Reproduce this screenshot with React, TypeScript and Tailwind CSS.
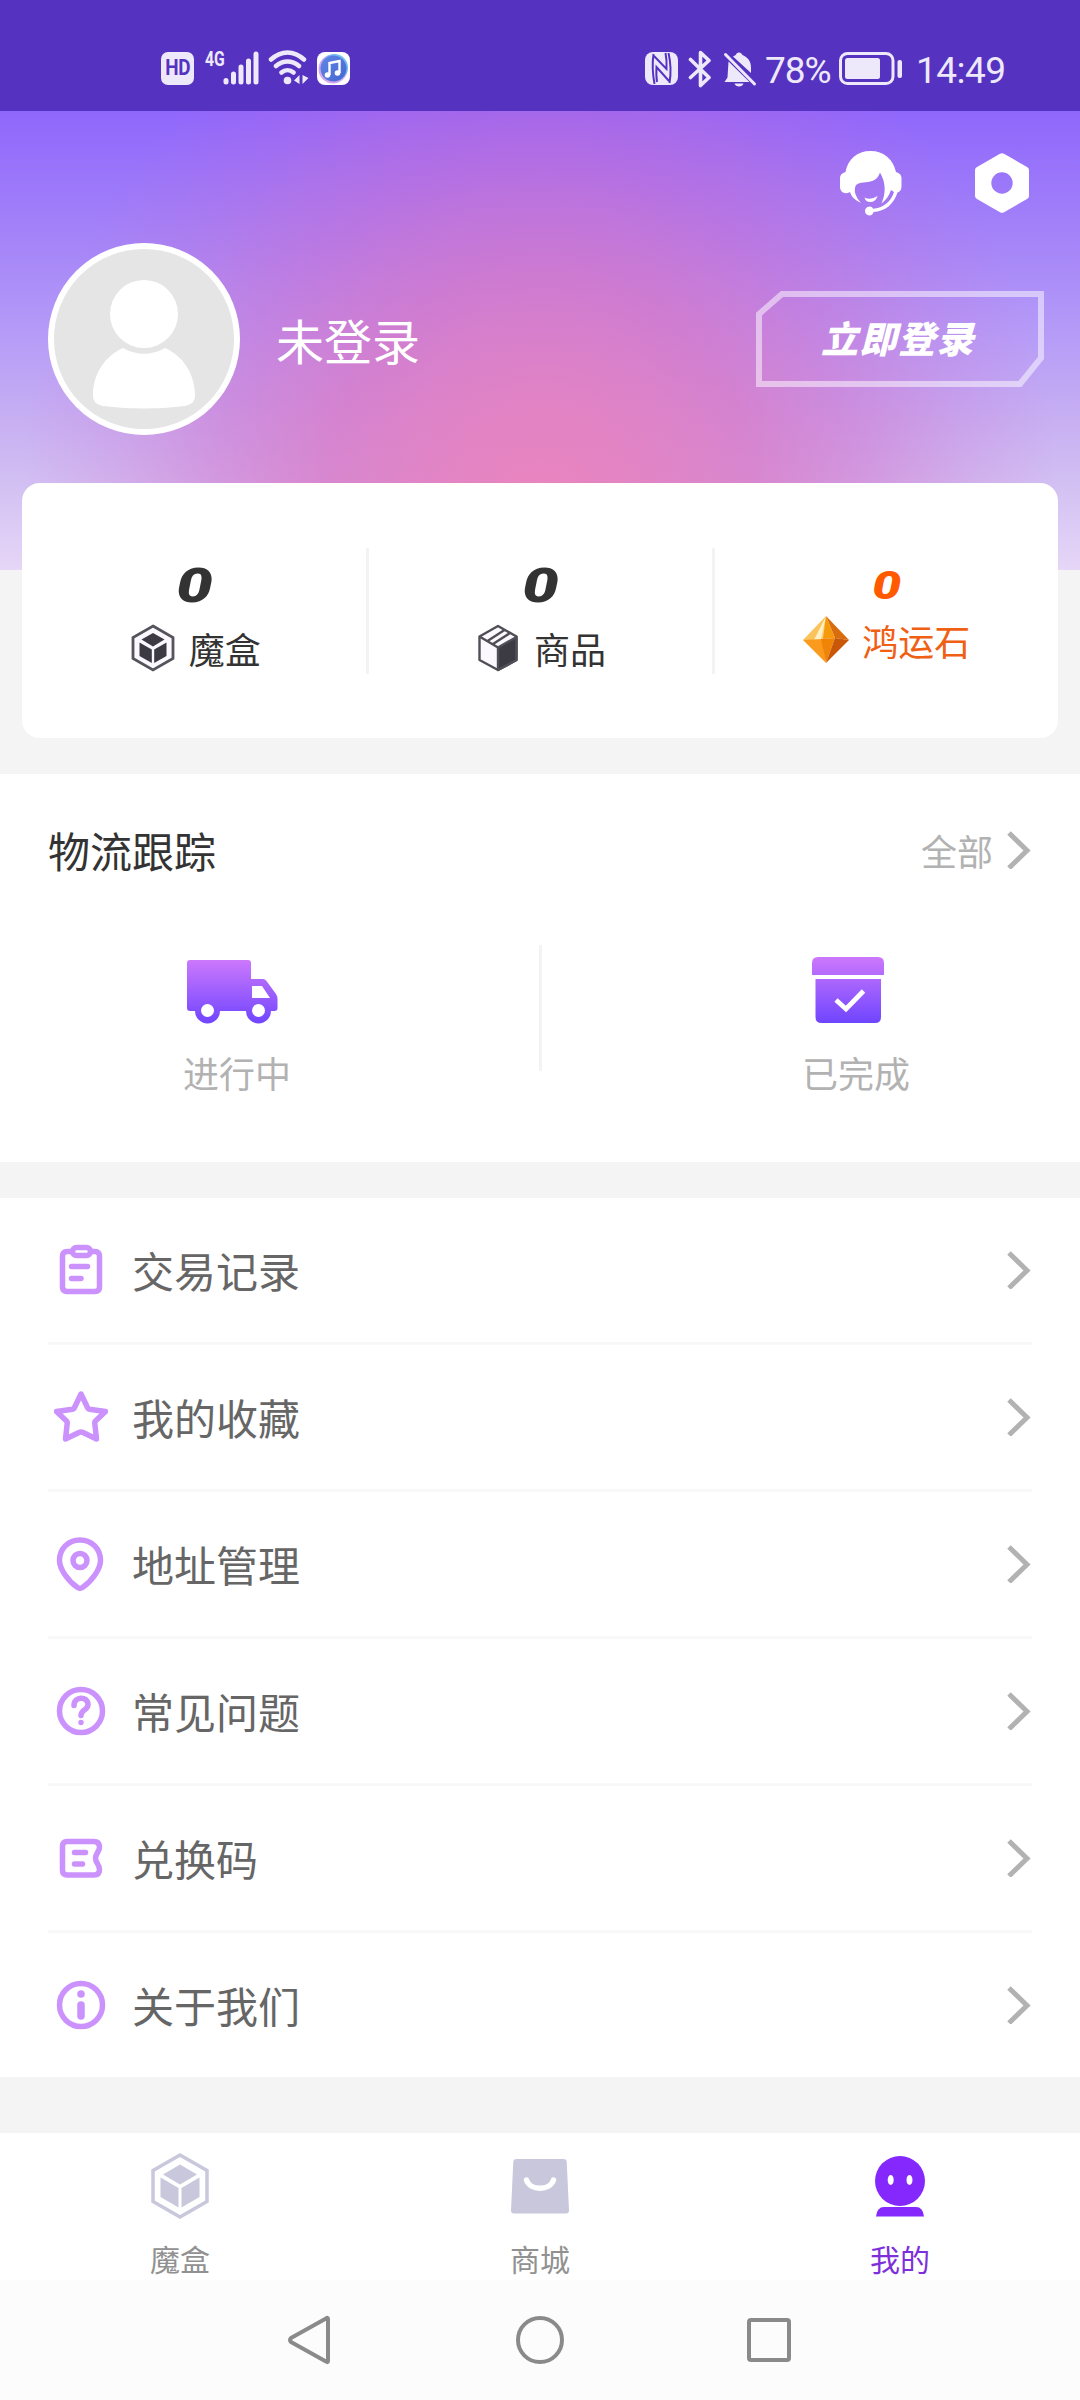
import React from 'react'

interface IconProps {
  className?: string
}

const HdIcon = () => (
  <span className="flex h-[33px] w-[33px] items-center justify-center rounded-[7px] bg-[#eee8fb]">
    <span className="scale-x-[0.9] scale-y-[1.05] font-['Roboto','Noto_Sans_CJK_SC',sans-serif] text-[21px] leading-none font-bold tracking-[-0.5px] text-[#5533c0]">HD</span>
  </span>
)

const SignalIcon = () => (
  <span className="relative block h-[36px] w-[55px] text-[#eee8fb]">
    <span className="absolute top-[-1px] left-0 origin-left scale-x-[0.75] font-['Roboto',sans-serif] text-[21px] leading-[20px] font-bold">4G</span>
    <svg className="absolute top-0 left-[18px]" width="36" height="36" viewBox="0 0 36 36" stroke="currentColor" strokeWidth="5" strokeLinecap="round">
      <path d="M3 30.5V32M10.500 24V32M18 17V32M25.500 11V32M33 4V32" />
    </svg>
  </span>
)

const WifiIcon = () => (
  <svg width="42" height="36" viewBox="0 0 42 36" fill="none" stroke="#eee8fb" strokeWidth="4.500" strokeLinecap="round">
    <path d="M3 9.500C13 0 26 0 36 9.500M8 16C15 10 24 10 31 16M13.500 22.500C17 19.500 22 19.500 25.500 22.500" />
    <circle cx="19.500" cy="30.500" r="3.800" fill="#eee8fb" stroke="none" />
    <path d="M31.500 25v9l-5.500-3.500zM34.500 25v9l6-6z" fill="#eee8fb" stroke="none" />
  </svg>
)

const MusicIcon = () => (
  <svg width="33" height="33" viewBox="0 0 33 33">
    <defs>
      <linearGradient id="music" x1="0" y1="0" x2="1" y2="1">
        <stop offset="0" stopColor="#5f86e6" />
        <stop offset="1" stopColor="#4468d2" />
      </linearGradient>
    </defs>
    <rect width="33" height="33" rx="8" fill="#fff" />
    <circle cx="16" cy="17" r="14.500" fill="#d6a5ee" />
    <circle cx="17.500" cy="15.500" r="13.500" fill="#74bdf2" />
    <circle cx="16.500" cy="16.500" r="13" fill="url(#music)" />
    <path d="M12.500 23V11l10-2v12" fill="none" stroke="#fff" strokeWidth="2.400" />
    <circle cx="10.500" cy="23" r="2.800" fill="#fff" />
    <circle cx="20.500" cy="21" r="2.800" fill="#fff" />
  </svg>
)

const NfcIcon = () => (
  <svg width="33" height="33" viewBox="0 0 33 33">
    <rect width="33" height="33" rx="8" fill="#eee8fb" />
    <path d="M8.500 2Q6.500 16 9.500 32M9 4L21.500 17Q22 8 20.500 1M24.500 31Q27 16 23.500 1M24 29L11.500 15Q11 24 12 30" fill="none" stroke="#5533c0" strokeWidth="2" />
  </svg>
)

const BluetoothIcon = () => (
  <svg width="24" height="38" viewBox="0 0 24 38" fill="none" stroke="#eee8fb" strokeWidth="3.600" strokeLinecap="round" strokeLinejoin="round">
    <path d="M2.500 9.500L21 27.500l-8.500 8V2.500L21 10.500 2.500 27.500" />
  </svg>
)

const BellOffIcon = () => (
  <svg width="34" height="35" viewBox="0 0 34 35" fill="#eee8fb">
    <path d="M10 4.500c2-1 3-1.500 4-3.500q2-1 4 0c1 2 2 2 3.500 3 5 3 6.500 7 6.500 11.500V21z" />
    <path d="M5.500 9.500l21 20.500H1.500l3-4.500zM11.500 31.500h9c-1 4-8 4-9 0z" />
    <path d="M2.500 2.500l29 29.500" stroke="#eee8fb" strokeWidth="3" strokeLinecap="round" />
  </svg>
)

const BatteryIcon = () => (
  <svg width="64" height="34" viewBox="0 0 64 34" fill="none">
    <rect x="1.500" y="1.500" width="52.500" height="30" rx="7" stroke="#eee8fb" strokeWidth="3" />
    <rect x="6" y="6" width="35" height="21" rx="2.500" fill="#eee8fb" />
    <rect x="58.500" y="8" width="4.500" height="18" rx="2" fill="#eee8fb" />
  </svg>
)

const StatusBar = () => (
  <div className="flex h-[111px] items-start justify-between bg-[#5533c0] pt-[50px] pr-[75px] pl-[161px]">
    <div className="flex items-start">
      <div className="mt-[2px] mr-[11px]"><HdIcon /></div>
      <SignalIcon />
      <div className="ml-[8px]"><WifiIcon /></div>
      <div className="mt-[2px] ml-[7px]"><MusicIcon /></div>
    </div>
    <div className="flex items-start font-['Roboto','Noto_Sans_CJK_SC',sans-serif] text-[37px] leading-[42px] text-[#eee8fb]">
      <div className="mt-[2px]"><NfcIcon /></div>
      <div className="ml-[10px]"><BluetoothIcon /></div>
      <div className="mt-[2px] ml-[11px]"><BellOffIcon /></div>
      <span className="ml-[8px] w-[74px] tracking-[-1px]">78%</span>
      <div className="mt-[2px]"><BatteryIcon /></div>
      <span className="ml-[13px] w-[89px] tracking-[-0.5px]">14:49</span>
    </div>
  </div>
)

const ServiceIcon = () => (
  <svg width="62" height="66" viewBox="0 0 62 66">
    <path
      fill="#fff"
      fillRule="evenodd"
      d="M5.500 21C8 8 17 0 30.500 0S53 8 56 21c3.500 1 5.500 3 5.500 6v8c0 4-1.500 6-4 6.500C54 53 45 60.500 33.500 61 33 63 31.500 64.500 29.500 64.500c-6 0-6-9 0-9 1.500 0 3 .8 3.500 2.200C43 57 51 51 54 41l-3-2c-2 6-5 10-9.500 13.500C46 42 46 32 40 21.500c-2 6-6 8.500-12 9.500-7 1-10 .5-12.500 4-2 6 .5 11 5.500 17C15 49 11.500 46 10 41c-5 3-10 0-10-5v-9c0-3 2-5 5.500-6z"
    />
    <path d="M24.500 46.500q6.500 3 13-1.500-2 6-7 6t-6-4.500z" fill="#fff" />
  </svg>
)

const SettingIcon = () => (
  <svg width="54" height="60" viewBox="0 0 54 60">
    <path
      fill="#fff"
      fillRule="evenodd"
      d="M25 .8q2-1.200 4 0L52 14q2 1.200 2 3v26q0 1.800-2 3L29 59.200q-2 1.200-4 0L2 46q-2-1.200-2-3v-26q0-1.800 2-3zM27 19.300a10.700 10.700 0 1 0 0 21.400 10.700 10.700 0 0 0 0-21.400z"
    />
  </svg>
)

const Avatar = () => (
  <div className="h-[192px] w-[192px] overflow-hidden rounded-full border-[6px] border-white bg-[#e5e5e5]">
    <svg width="180" height="180" viewBox="0 0 180 180" fill="#fff">
      <circle cx="90" cy="65" r="34" />
      <path d="M69 99q21 11.500 42 0c18 8 30 26 30 47 0 7-3 9-10 11q-41 5-82 0c-7-2-10-4-10-11 0-21 12-39 30-47z" />
    </svg>
  </div>
)

const LoginButton = () => (
  <button className="relative h-24 w-[288px]">
    <svg className="absolute inset-0" width="288" height="96" viewBox="0 0 288 96" fill="none" stroke="#fff" strokeOpacity="0.5" strokeWidth="6">
      <path d="M26 3H285V67L264 93H3V23z" />
    </svg>
    <span className="relative block pr-1 pb-1 text-[37px] leading-[90px] font-black tracking-[1.5px] text-white italic">立即登录</span>
  </button>
)

const Header = () => (
  <div className="h-[459px] bg-[radial-gradient(ellipse_520px_560px_at_540px_400px,#ea84be_0%,rgba(228,126,192,0.9)_20%,rgba(218,114,194,0.72)_42%,rgba(212,104,198,0.45)_62%,rgba(208,100,200,0.18)_82%,transparent_100%),linear-gradient(180deg,#8f67fc_0%,#a686f8_30%,#b79df7_50%,#c8b0f2_68%,#d3c1f3_82%,#e6d6f7_100%)]">
    <div className="flex justify-end gap-[73px] pt-10 pr-[51px]">
      <ServiceIcon />
      <div className="mt-[2px]"><SettingIcon /></div>
    </div>
    <div className="mt-[26px] flex items-center pr-9 pl-12">
      <Avatar />
      <span className="ml-9 flex-1 text-5xl leading-none text-white">未登录</span>
      <LoginButton />
    </div>
  </div>
)

const hexCube = {
  outer: 'M24 2L44 13.500V34.500L24 46 4 34.500V13.500z',
  top: 'M24 9L35.500 15.500 24 22.500 12.500 15.500z',
  left: 'M10.500 18.500L22.800 25.500V39L10.500 32z',
  right: 'M37.500 18.500L25.200 25.500V39L37.500 32z',
}

const BoxIcon = () => (
  <svg width="48" height="48" viewBox="0 0 48 48" fill="#3c3a42">
    <path d={hexCube.outer} fill="#fbf9ff" stroke="#55535c" strokeWidth="2.800" />
    <path d={hexCube.top} />
    <path d={hexCube.left} />
    <path d={hexCube.right} />
  </svg>
)

const GoodsIcon = () => (
  <svg width="48" height="48" viewBox="0 0 48 48" fill="none" stroke="#504e56" strokeWidth="2.400" strokeLinejoin="round">
    <path d="M24 2L42.500 12.500V36L24 46 5.500 36V12.500z" fill="#fbf9ff" />
    <path d="M24 23.500L42.500 13V36L24 46z" fill="#3c3a42" />
    <path d="M5.500 12.500L24 23.500M13.500 17L30.500 6M19 20L36 9" />
  </svg>
)

const StoneIcon = () => (
  <svg width="48" height="48" viewBox="0 0 48 48">
    <path d="M24 0L20 24H1z" fill="#fbc35c" />
    <path d="M24 0L12 24H20z" fill="#fff0c8" />
    <path d="M24 0V24L19 23z" fill="#ffcf6b" />
    <path d="M24 0L33 22 21 23z" fill="#f59a0c" />
    <path d="M24 0L47 24 33 22z" fill="#d96c0c" />
    <path d="M1 24L20 23 24 47z" fill="#fb9b1e" />
    <path d="M19 23L33 22 24 47z" fill="#f08407" />
    <path d="M33 22L47 24 24 47z" fill="#c95708" />
  </svg>
)

const Stats = () => (
  <div className="mx-[22px] -mt-[87px] grid h-[255px] grid-cols-3 rounded-[18px] bg-white">
    <div className="relative flex flex-col items-center pt-[82px] text-[#333]">
      <span className="scale-x-[1.35] font-['Roboto',sans-serif] text-[48px] leading-[42px] font-black italic">0</span>
      <div className="mt-[17px] flex items-center gap-3">
        <BoxIcon />
        <span className="text-4xl leading-none">魔盒</span>
      </div>
      <i className="absolute top-[65px] right-[-2px] h-[126px] w-[3px] bg-[#f3f3f3]" />
    </div>
    <div className="relative flex flex-col items-center pt-[82px] text-[#333]">
      <span className="scale-x-[1.35] font-['Roboto',sans-serif] text-[48px] leading-[42px] font-black italic">0</span>
      <div className="mt-[17px] flex items-center gap-3">
        <GoodsIcon />
        <span className="text-4xl leading-none">商品</span>
      </div>
      <i className="absolute top-[65px] right-[-2px] h-[126px] w-[3px] bg-[#f3f3f3]" />
    </div>
    <div className="flex flex-col items-center pt-[82px] pl-[2px] text-[#f06014]">
      <span className="scale-x-[1.35] font-['Roboto',sans-serif] text-[38px] leading-[42px] font-black text-[#ff5a00] italic">0</span>
      <div className="mt-[9px] flex items-center gap-3">
        <StoneIcon />
        <span className="text-4xl leading-none">鸿运石</span>
      </div>
    </div>
  </div>
)

const ChevronIcon = ({ className }: IconProps) => (
  <svg className={className} width="25" height="38" viewBox="0 0 25 38" fill="none" stroke="#b2b2b2" strokeWidth="5">
    <path d="M2 2L20 19.500 2 37" />
  </svg>
)

const TruckIcon = () => (
  <svg width="92" height="64" viewBox="0 0 92 64">
    <defs>
      <linearGradient id="truck" gradientUnits="userSpaceOnUse" x1="0" y1="0" x2="0" y2="64">
        <stop offset="0" stopColor="#cc78fc" />
        <stop offset="1" stopColor="#6f45ff" />
      </linearGradient>
    </defs>
    <path
      fill="url(#truck)"
      fillRule="evenodd"
      d="M3 0H61q3 0 3 3V19H76q2 0 3.500 2L89 34q1.500 2.500 1.500 5V48q0 3-3 3H84A12.500 12.500 0 0 1 59 51H33A12.500 12.500 0 0 1 8 51H3q-3 0-3-3V3q0-3 3-3zM65 26V38H83L75 26zM20.500 44a6.500 6.500 0 1 0 0 13 6.500 6.500 0 0 0 0-13zM71.500 44a6.500 6.500 0 1 0 0 13 6.500 6.500 0 0 0 0-13z"
    />
  </svg>
)

const DoneIcon = () => (
  <svg width="72" height="66" viewBox="0 0 72 66">
    <defs>
      <linearGradient id="done" gradientUnits="userSpaceOnUse" x1="0" y1="0" x2="0" y2="66">
        <stop offset="0" stopColor="#cc78fc" />
        <stop offset="1" stopColor="#6f45ff" />
      </linearGradient>
    </defs>
    <path d="M6 0H66q6 0 6 6V18H0V6q0-6 6-6zM3.500 22H69V60q0 6-6 6H9.500q-6 0-6-6z" fill="url(#done)" />
    <path d="M24 43L34 52 51.500 34" fill="none" stroke="#fff" strokeWidth="4.800" />
  </svg>
)

const Logistics = () => (
  <div className="mt-9 h-[388px] bg-white px-12">
    <div className="flex h-[97px] items-end justify-between">
      <span className="text-[42px] leading-[42px] text-[#333]">物流跟踪</span>
      <span className="flex items-center text-4xl leading-[42px] text-[#b2b2b2]">
        全部
        <ChevronIcon className="ml-[14px]" />
      </span>
    </div>
    <div className="relative flex justify-between pt-[86px] pr-[122px] pl-[135px]">
      <div className="flex h-[140px] w-[108px] flex-col">
        <div className="mt-[3px] ml-[4px] h-[91px]"><TruckIcon /></div>
        <span className="text-4xl leading-[42px] text-[#b2b2b2]">进行中</span>
      </div>
      <i className="absolute top-[74px] left-[491px] h-[126px] w-[3px] bg-[#f3f3f3]" />
      <div className="flex h-[140px] w-[108px] flex-col">
        <div className="ml-[10px] h-[94px]"><DoneIcon /></div>
        <span className="text-4xl leading-[42px] text-[#b2b2b2]">已完成</span>
      </div>
    </div>
  </div>
)

const menuItems = [
  {
    label: '交易记录',
    icon: (
      <>
        <path d="M17 8.500H13q-4.500 0-4.500 4.500V44q0 4.500 4.500 4.500H41q4.500 0 4.500-4.500V13q0-4.500-4.500-4.500H37" />
        <rect x="18.500" y="4.500" width="18" height="8" rx="4" />
        <path d="M17.500 23.500H33.500M17.500 35.500H27" />
      </>
    ),
  },
  {
    label: '我的收藏',
    icon: <path d="M27 4L33.500 17.500Q34 19 35.500 19.200L51.500 21.500 41.500 31Q40.500 32 40.800 33.500L42.500 49 29 42.500Q27 41.500 25 42.500L11.500 49 13.200 33.500Q13.500 32 12.500 31L2.500 21.500 18.500 19.200Q20 19 20.500 17.500z" />,
  },
  {
    label: '地址管理',
    icon: (
      <>
        <path d="M26 3C14 3 5.500 12 5.500 23.500 5.500 32 14 44 23.500 50.500Q26 52 28.500 50.500C38 44 46.500 32 46.500 23.500 46.500 12 38 3 26 3z" />
        <circle cx="26" cy="23.500" r="7" />
      </>
    ),
  },
  {
    label: '常见问题',
    icon: (
      <>
        <circle cx="27" cy="27" r="21.500" />
        <path d="M20 21.500C20 12 34 12 34 20.500 34 26.500 27 25 27 31.500" />
        <circle cx="27" cy="38.500" r="2.700" fill="#cb92fd" stroke="none" />
      </>
    ),
  },
  {
    label: '兑换码',
    icon: (
      <>
        <path d="M13 10.500H40Q45 10.500 45.500 15.500C46 20 41.500 22.500 41.500 27 41.500 32.500 45.500 33 45.500 38.500Q45.500 44 40 44H13Q8.500 44 8.500 39.500V15Q8.500 10.500 13 10.500z" />
        <path d="M20.500 21.500H31.500M20.500 33H28.500" />
      </>
    ),
  },
  {
    label: '关于我们',
    icon: (
      <>
        <circle cx="27" cy="27" r="21.500" />
        <circle cx="27" cy="16" r="3.800" fill="#cb92fd" stroke="none" />
        <path d="M27 27V38" strokeWidth="7.500" />
      </>
    ),
  },
]

const Menu = () => (
  <div className="mt-9 h-[879px] bg-white px-12">
    {menuItems.map((item) => (
      <div key={item.label} className="flex h-[147px] items-center border-b-[3px] border-[#f8f8f8] last:h-36 last:border-b-0">
        <svg className="ml-[6px]" width="54" height="54" viewBox="0 0 54 54" fill="none" stroke="#cb92fd" strokeWidth="5.500" strokeLinecap="round" strokeLinejoin="round">
          {item.icon}
        </svg>
        <span className="ml-6 flex-1 text-[42px] leading-none text-[#666]">{item.label}</span>
        <ChevronIcon />
      </div>
    ))}
  </div>
)

const TabBar = () => (
  <div className="mt-14 grid h-[147px] grid-cols-3 bg-white text-[30px] leading-[36px] text-[#919191]">
    <div className="flex flex-col items-center pt-[19px]">
      <svg width="60" height="68" viewBox="0 0 60 68" fill="#c8c7dc">
        <path d="M30 3L57 18.500V49.500L30 65 3 49.500V18.500z" fill="none" stroke="#c8c7dc" strokeWidth="3.500" />
        <path d="M30 12.500L47 22.500 30 32.500 13 22.500zM10.500 25.500L28.500 36V55.500L10.500 45zM49.500 25.500L31.500 36V55.500L49.500 45z" />
      </svg>
      <span className="mt-[20px]">魔盒</span>
    </div>
    <div className="flex flex-col items-center pt-[19px]">
      <svg width="60" height="68" viewBox="0 0 60 68">
        <path d="M6.500 7H53.500q3 0 3.200 3L59 58.500q0 3-3 3H4q-3 0-3-3L3.300 10q.2-3 3.200-3z" fill="#c8c7dc" />
        <path d="M16.500 28C20 39 40 39 43.500 28" fill="none" stroke="#fff" strokeWidth="5.500" strokeLinecap="round" />
      </svg>
      <span className="mt-[20px]">商城</span>
    </div>
    <div className="flex flex-col items-center pt-[19px] text-[#7d2fdc]">
      <svg width="60" height="68" viewBox="0 0 60 68" fill="#8428fe">
        <circle cx="30" cy="29" r="25" />
        <path d="M6 64.500Q7 55 14 55H46Q53 55 54 64.500z" />
        <ellipse cx="20.700" cy="28" rx="3" ry="5" fill="#fff" />
        <ellipse cx="39.500" cy="28" rx="3" ry="5" fill="#fff" />
      </svg>
      <span className="mt-[20px]">我的</span>
    </div>
  </div>
)

const SystemNav = () => (
  <div className="flex h-[120px] items-center justify-between bg-[#fcfcfc] pr-[289px] pl-[287px]">
    <svg width="44" height="50" viewBox="0 0 44 50" fill="none" stroke="#8a8a8a" strokeWidth="4" strokeLinejoin="round">
      <path d="M41 4V46Q41 48 39 46.500L4 27Q2 25 4 23L39 3.500Q41 2 41 4z" />
    </svg>
    <div className="ml-px h-12 w-12 rounded-full border-4 border-[#8a8a8a]" />
    <div className="h-11 w-11 rounded-[4px] border-4 border-[#8a8a8a]" />
  </div>
)

export default function App() {
  return (
    <div className="h-[2400px] w-[1080px] overflow-hidden bg-[#f4f4f4] font-['Noto_Sans_CJK_SC',sans-serif]">
      <StatusBar />
      <Header />
      <Stats />
      <Logistics />
      <Menu />
      <TabBar />
      <SystemNav />
    </div>
  )
}
